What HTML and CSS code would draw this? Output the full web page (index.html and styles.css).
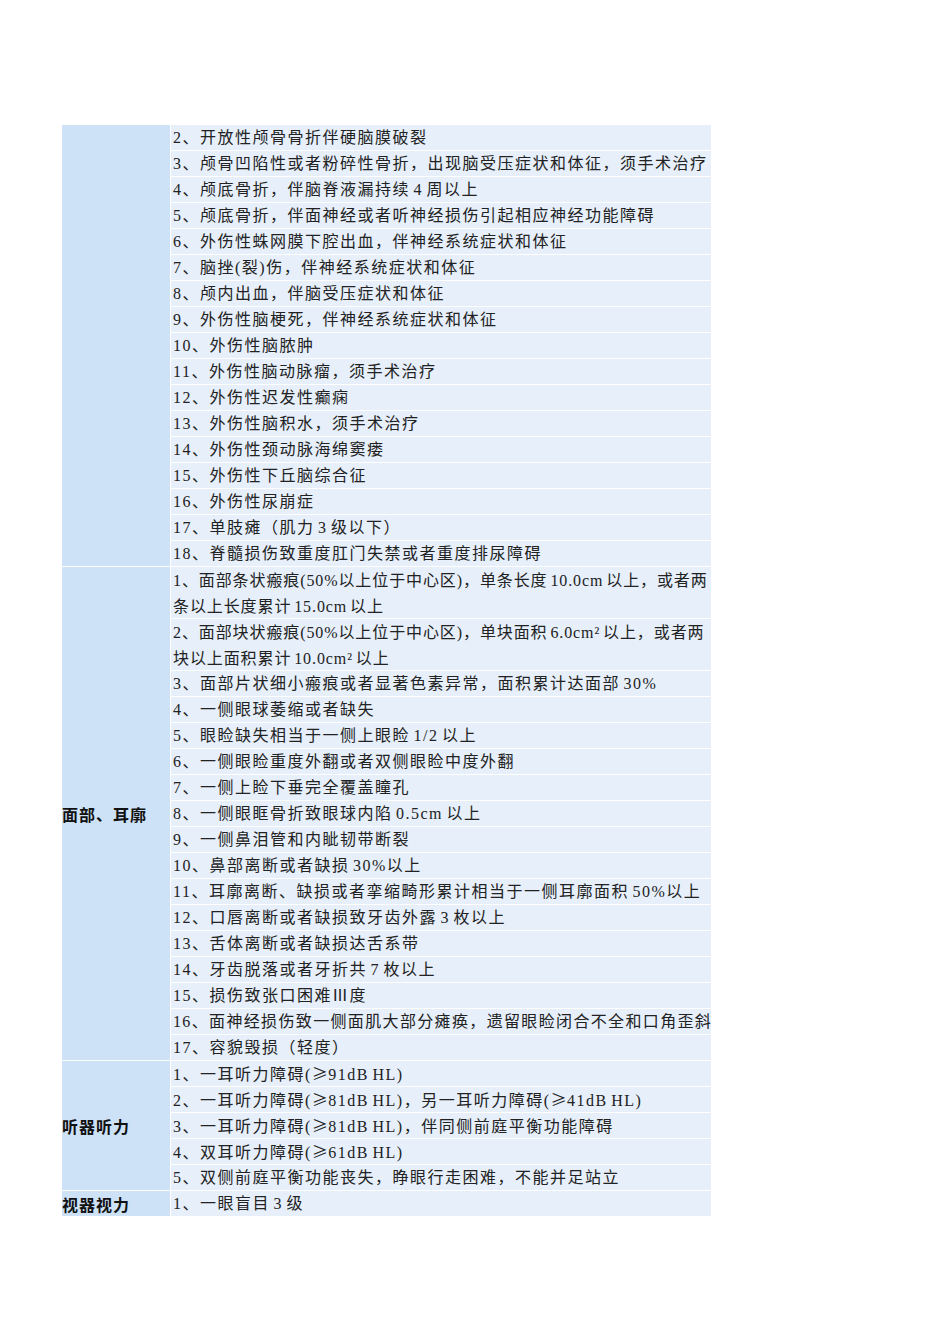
FILE: index.html
```html
<!DOCTYPE html>
<html lang="zh-CN">
<head>
<meta charset="utf-8">
<title>伤残等级</title>
<link rel="stylesheet" href="styles.css">
</head>
<body>
<div class="sheet">
  <section class="group">
    <div class="label"></div>
    <div class="items">
      <div class="item">2、开放性颅骨骨折伴硬脑膜破裂</div>
      <div class="item">3、颅骨凹陷性或者粉碎性骨折，出现脑受压症状和体征，须手术治疗</div>
      <div class="item">4、颅底骨折，伴脑脊液漏持续 4 周以上</div>
      <div class="item">5、颅底骨折，伴面神经或者听神经损伤引起相应神经功能障碍</div>
      <div class="item">6、外伤性蛛网膜下腔出血，伴神经系统症状和体征</div>
      <div class="item">7、脑挫(裂)伤，伴神经系统症状和体征</div>
      <div class="item">8、颅内出血，伴脑受压症状和体征</div>
      <div class="item">9、外伤性脑梗死，伴神经系统症状和体征</div>
      <div class="item">10、外伤性脑脓肿</div>
      <div class="item">11、外伤性脑动脉瘤，须手术治疗</div>
      <div class="item">12、外伤性迟发性癫痫</div>
      <div class="item">13、外伤性脑积水，须手术治疗</div>
      <div class="item">14、外伤性颈动脉海绵窦瘘</div>
      <div class="item">15、外伤性下丘脑综合征</div>
      <div class="item">16、外伤性尿崩症</div>
      <div class="item">17、单肢瘫（肌力 3 级以下）</div>
      <div class="item">18、脊髓损伤致重度肛门失禁或者重度排尿障碍</div>
    </div>
  </section>
  <section class="group">
    <div class="label">面部、耳廓</div>
    <div class="items">
      <div class="item tight">1、面部条状瘢痕(50%以上位于中心区)，单条长度 10.0cm 以上，或者两<br>条以上长度累计 15.0cm 以上</div>
      <div class="item tight">2、面部块状瘢痕(50%以上位于中心区)，单块面积 6.0cm² 以上，或者两<br>块以上面积累计 10.0cm² 以上</div>
      <div class="item">3、面部片状细小瘢痕或者显著色素异常，面积累计达面部 30%</div>
      <div class="item">4、一侧眼球萎缩或者缺失</div>
      <div class="item">5、眼睑缺失相当于一侧上眼睑 1/2 以上</div>
      <div class="item">6、一侧眼睑重度外翻或者双侧眼睑中度外翻</div>
      <div class="item">7、一侧上睑下垂完全覆盖瞳孔</div>
      <div class="item">8、一侧眼眶骨折致眼球内陷 0.5cm 以上</div>
      <div class="item">9、一侧鼻泪管和内眦韧带断裂</div>
      <div class="item">10、鼻部离断或者缺损 30%以上</div>
      <div class="item">11、耳廓离断、缺损或者挛缩畸形累计相当于一侧耳廓面积 50%以上</div>
      <div class="item">12、口唇离断或者缺损致牙齿外露 3 枚以上</div>
      <div class="item">13、舌体离断或者缺损达舌系带</div>
      <div class="item">14、牙齿脱落或者牙折共 7 枚以上</div>
      <div class="item">15、损伤致张口困难Ⅲ度</div>
      <div class="item fit">16、面神经损伤致一侧面肌大部分瘫痪，遗留眼睑闭合不全和口角歪斜</div>
      <div class="item">17、容貌毁损（轻度）</div>
    </div>
  </section>
  <section class="group">
    <div class="label">听器听力</div>
    <div class="items">
      <div class="item">1、一耳听力障碍(<span class="sym">≥</span>91dB HL)</div>
      <div class="item">2、一耳听力障碍(<span class="sym">≥</span>81dB HL)，另一耳听力障碍(<span class="sym">≥</span>41dB HL)</div>
      <div class="item">3、一耳听力障碍(<span class="sym">≥</span>81dB HL)，伴同侧前庭平衡功能障碍</div>
      <div class="item">4、双耳听力障碍(<span class="sym">≥</span>61dB HL)</div>
      <div class="item">5、双侧前庭平衡功能丧失，睁眼行走困难，不能并足站立</div>
    </div>
  </section>
  <section class="group">
    <div class="label">视器视力</div>
    <div class="items">
      <div class="item">1、一眼盲目 3 级</div>
    </div>
  </section>
</div>
</body>
</html>
```

FILE: styles.css
```css
html, body {
  margin: 0;
  padding: 0;
  background: #ffffff;
}

.sheet {
  display: flex;
  flex-direction: column;
  gap: 1px;
  width: 649px;
  margin: 125px 0 0 62px;
}

.group {
  display: grid;
  grid-template-columns: 108px 540px;
  column-gap: 1px;
}

.label {
  background: #cde1f7;
  display: flex;
  align-items: center;
  font-family: "Noto Sans CJK SC", sans-serif;
  font-weight: 700;
  font-size: 16px;
  letter-spacing: 1px;
  color: #111;
}

.items {
  display: flex;
  flex-direction: column;
  gap: 1px;
}

.item {
  background: #e6effa;
  height: 25px;
  line-height: 25px;
  padding-left: 2px;
  white-space: nowrap;
  font-family: "Liberation Serif", "Noto Sans CJK SC", serif;
  font-size: 16px;
  letter-spacing: 1.5px;
  word-spacing: -2px;
  color: #222;
}

.item.tight {
  height: 51px;
  line-height: 25.5px;
  padding-top: 1px;
  box-sizing: border-box;
  letter-spacing: 0.9px;
}

.item.fit {
  letter-spacing: 1.35px;
}

.sym {
  font-family: "Noto Sans CJK SC", sans-serif;
  letter-spacing: 0.5px;
}
```
